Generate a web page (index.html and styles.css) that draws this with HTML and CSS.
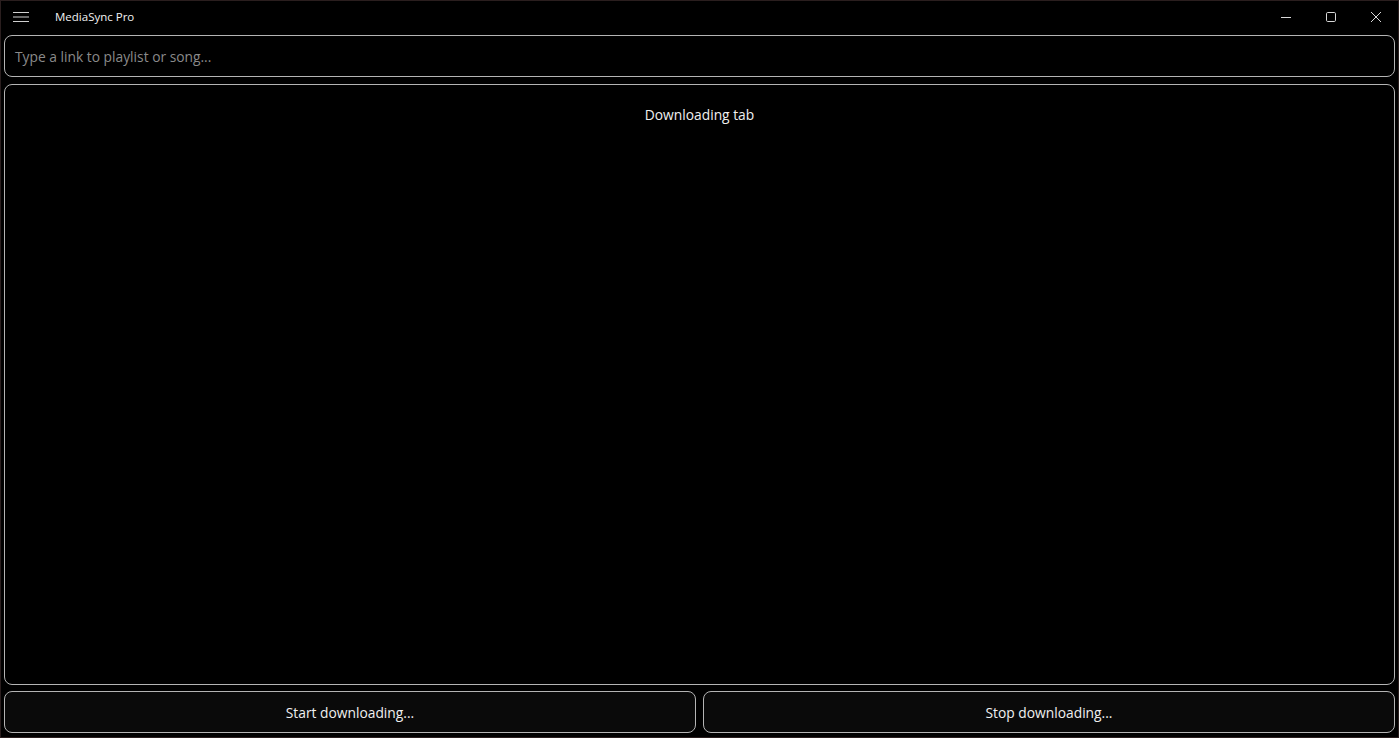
FILE: index.html
```html
<!DOCTYPE html>
<html>
<head>
<meta charset="utf-8">
<title>MediaSync Pro</title>
<link rel="stylesheet" href="styles.css">
</head>
<body>
<div class="window">
  <header class="titlebar">
    <div class="menu-btn">
      <svg width="16" height="12" viewBox="0 0 16 12"><path d="M0 1.5H16M0 6H16M0 10.5H16" stroke="#d0d0d0" stroke-width="1.2" fill="none"/></svg>
    </div>
    <div class="title">MediaSync Pro</div>
    <div class="caption">
      <div class="cap-btn"><svg width="12" height="12" viewBox="0 0 12 12"><path d="M1 6.5H11" stroke="#d8d8d8" stroke-width="1" fill="none"/></svg></div>
      <div class="cap-btn"><svg width="12" height="12" viewBox="0 0 12 12"><rect x="1.5" y="1.5" width="9" height="9" rx="1.2" stroke="#d8d8d8" stroke-width="1" fill="none"/></svg></div>
      <div class="cap-btn"><svg width="12" height="12" viewBox="0 0 12 12"><path d="M1 1L11 11M11 1L1 11" stroke="#d8d8d8" stroke-width="1" fill="none"/></svg></div>
    </div>
  </header>
  <main class="content">
    <div class="input-box"><span class="placeholder">Type a link to playlist or song...</span></div>
    <section class="panel"><div class="panel-title">Downloading tab</div></section>
    <div class="actions">
      <div class="btn">Start downloading...</div>
      <div class="btn">Stop downloading...</div>
    </div>
  </main>
</div>
</body>
</html>
```

FILE: styles.css
```css
html, body {
  margin: 0;
  padding: 0;
  background: #000;
}
body {
  font-family: "Open Sans", "Noto Sans", sans-serif;
  color: #f0f0f0;
}
.window {
  box-sizing: border-box;
  width: 1399px;
  height: 738px;
  border: 1px solid #2a1e1e;
  display: flex;
  flex-direction: column;
  background: #000;
}
.titlebar {
  height: 34px;
  display: flex;
  align-items: center;
  flex-shrink: 0;
}
.menu-btn {
  width: 40px;
  height: 30px;
  display: flex;
  align-items: center;
  justify-content: center;
  margin-top: -3px;
}
.title {
  font-size: 11.5px;
  margin-left: 14px;
  margin-top: -3px;
  color: #f2f2f2;
  flex: 1;
}
.caption {
  display: flex;
  align-self: flex-start;
}
.cap-btn {
  width: 45px;
  height: 31px;
  display: flex;
  align-items: center;
  justify-content: center;
}
.content {
  flex: 1;
  display: flex;
  flex-direction: column;
  padding: 0 3px 4px 3px;
  min-height: 0;
}
.input-box {
  box-sizing: border-box;
  height: 42px;
  border: 1.5px solid #b4b4b4;
  border-radius: 8px;
  display: flex;
  align-items: center;
  padding-left: 10px;
  flex-shrink: 0;
}
.placeholder {
  color: #8a8a8a;
  font-size: 13.8px;
  margin-top: 1px;
}
.panel {
  box-sizing: border-box;
  flex: 1;
  margin-top: 7px;
  border: 1.5px solid #b4b4b4;
  border-radius: 8px;
  display: flex;
  justify-content: center;
}
.panel-title {
  font-size: 13.8px;
  margin-top: 20px;
  line-height: 20px;
}
.actions {
  display: flex;
  gap: 7px;
  margin-top: 6px;
  flex-shrink: 0;
}
.btn {
  box-sizing: border-box;
  flex: 1;
  height: 42px;
  border: 1.5px solid #b4b4b4;
  border-radius: 8px;
  background: #0a0a0a;
  display: flex;
  align-items: center;
  justify-content: center;
  font-size: 13.8px;
}
```
